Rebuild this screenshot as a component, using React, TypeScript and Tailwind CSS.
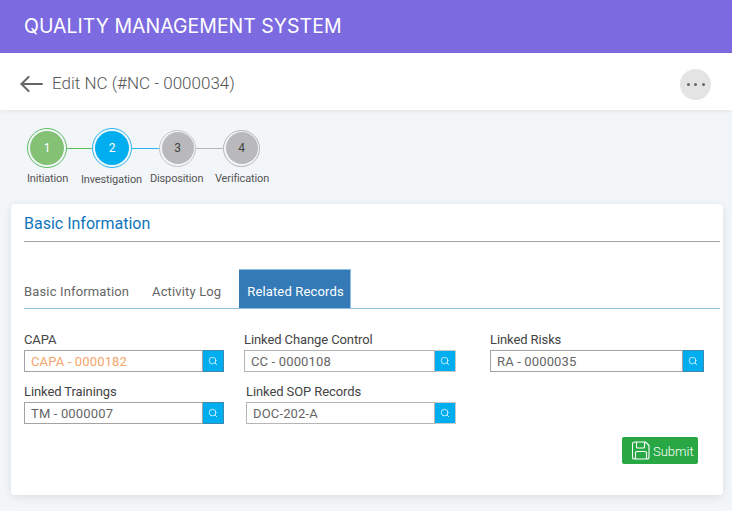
import React from "react";
import { Search } from "lucide-react";

const steps = [
  { n: 1, label: "Initiation", ring: "border-[#5cbf62]", fill: "bg-[#84c175]", text: "text-white", size: "w-[40px] h-[40px]", inner: "w-[34px] h-[34px]" },
  { n: 2, label: "Investigation", ring: "border-[#2cb5ee]", fill: "bg-[#00aeef]", text: "text-white", size: "w-[40px] h-[40px]", inner: "w-[34px] h-[34px]" },
  { n: 3, label: "Disposition", ring: "border-[#c4c4c6]", fill: "bg-[#b9b9bb]", text: "text-[#444]", size: "w-[37px] h-[37px]", inner: "w-[32px] h-[32px]" },
  { n: 4, label: "Verification", ring: "border-[#b4b4b6]", fill: "bg-[#b9b9bb]", text: "text-[#444]", size: "w-[37px] h-[37px]", inner: "w-[32px] h-[32px]" },
];

function Circle({ step }: { step: (typeof steps)[number] }) {
  return (
    <div className={`${step.size} ${step.ring} shrink-0 rounded-full border-[1.5px] flex items-center justify-center`}>
      <div className={`${step.inner} ${step.fill} ${step.text} rounded-full flex items-center justify-center text-[12px]`}>
        {step.n}
      </div>
    </div>
  );
}

function Lookup({ label, value, width, inputClass, soft, className }: { label: string; value: string; width: string; inputClass?: string; soft?: boolean; className?: string }) {
  return (
    <div className={`${width} ${className ?? ""}`}>
      <div className="text-[13px] leading-[15px] tracking-[-0.1px] text-[#444] mb-[3px] whitespace-nowrap">{label}</div>
      <div className="flex h-[22px]">
        <div className={`flex-1 min-w-0 border ${soft ? "border-[#b5b5b5]" : "border-[#a3a3a3]"} bg-white pl-[6px] text-[13px] leading-[21px] tracking-[0.15px] ${inputClass ?? "text-[#666]"}`}>
          {value}
        </div>
        <div className={`w-[21px] bg-[#00aeef] border-y border-r flex items-center justify-center ${soft ? "border-[#c8c8c8]" : "border-[#3d8ab0]"}`}>
          <Search size={10} className="text-white" strokeWidth={1.8} />
        </div>
      </div>
    </div>
  );
}

export default function App() {
  return (
    <div className="w-[732px] h-[511px] overflow-hidden bg-[#f3f6f9] font-['Roboto',sans-serif]">
      <div className="h-[53px] bg-[#7c6ae0] flex items-center pl-[24px] text-white text-[19.5px] font-['Inter',sans-serif]">
        QUALITY MANAGEMENT SYSTEM
      </div>
      <div className="h-[57px] bg-white flex items-center justify-between pt-[5px] pl-[20px] pr-[21px] shadow-[0_1px_4px_rgba(0,0,0,0.08)]">
        <div className="flex items-center gap-[9px]">
          <svg width="23" height="16" viewBox="0 0 23 16" fill="none" stroke="#666" strokeWidth="2" strokeLinecap="round" strokeLinejoin="round">
            <path d="M22 8H1.5" />
            <path d="M8.5 1L1.5 8l7 7" />
          </svg>
          <span className="text-[17px] font-light text-[#555]">Edit NC (#NC - 0000034)</span>
        </div>
        <div className="w-[31px] h-[31px] rounded-full bg-[#e4e4e4] flex items-center justify-center gap-[4.5px]">
          <span className="w-[3px] h-[3px] rounded-full bg-[#666]" />
          <span className="w-[3px] h-[3px] rounded-full bg-[#666]" />
          <span className="w-[3px] h-[3px] rounded-full bg-[#666]" />
        </div>
      </div>

      <div className="pl-[11px] pt-[18px]">
        <div className="flex items-center pl-[16px]">
          <Circle step={steps[0]} />
          <div className="w-[25px] h-px bg-[#5cbf62]" />
          <Circle step={steps[1]} />
          <div className="w-[27px] h-px bg-[#2cb5ee]" />
          <Circle step={steps[2]} />
          <div className="w-[27px] h-px bg-[#b4b4b6]" />
          <Circle step={steps[3]} />
        </div>
        <div className="flex text-[11px] leading-[13px] tracking-[-0.15px] text-[#555] mt-[4px] h-[32px]">
          <span className="w-[70px] pl-[16px]">Initiation</span>
          <span className="w-[69px] mt-[1px]">Investigation</span>
          <span className="w-[65px]">Disposition</span>
          <span>Verification</span>
        </div>

        <div className="h-[291px] w-[712px] bg-white rounded-[4px] pl-[13px] pr-[3px] shadow-[0_2px_10px_rgba(0,0,0,0.1)]">
          <div className="h-[38px] border-b border-[#a3a3a3] text-[16px] leading-[39px] text-[#0f75bc]">Basic Information</div>
          <div className="flex items-stretch h-[40px] mt-[27px] border-b border-[#8fc1e3] text-[13px] tracking-[0.15px]">
            <div className="flex items-center pt-[6px] text-[#666] w-[128px]">Basic Information</div>
            <div className="flex items-center pt-[6px] text-[#666] w-[87px]">Activity Log</div>
            <div className="flex items-center justify-center pt-[6px] pl-[2px] w-[112px] bg-[#337ab7] text-white border-t border-r border-[#8fc1e3]">Related Records</div>
          </div>
          <div className="flex mt-[23px]">
            <Lookup label="CAPA" value="CAPA - 0000182" width="w-[200px]" inputClass="text-[#f5a46c]" />
            <Lookup label="Linked Change Control" value="CC - 0000108" width="w-[212px]" soft className="ml-[20px]" />
            <Lookup label="Linked Risks" value="RA - 0000035" width="w-[214px]" className="ml-[34px]" />
          </div>
          <div className="flex mt-[12px]">
            <Lookup label="Linked Trainings" value="TM - 0000007" width="w-[200px]" />
            <Lookup label="Linked SOP Records" value="DOC-202-A" width="w-[210px]" soft className="ml-[22px]" />
          </div>
          <div className="flex justify-end mt-[13px] pr-[22px]">
            <button className="h-[27px] w-[76px] rounded-[2px] bg-[#28a745] text-white text-[13px] font-light flex items-center pl-[10px] gap-[3px]">
              <svg width="18" height="19" viewBox="0 0 18 19" fill="none" stroke="currentColor" strokeWidth="1.1" strokeLinejoin="round">
                <path d="M2.5 1h11L17 4.5V16a2 2 0 0 1-2 2H2.5a2 2 0 0 1-2-2V3a2 2 0 0 1 2-2z" />
                <path d="M4.5 1v5a1 1 0 0 0 1 1h6a1 1 0 0 0 1-1V1" />
                <path d="M3.5 18v-6a1.5 1.5 0 0 1 1.5-1.5h8a1.5 1.5 0 0 1 1.5 1.5v6" />
              </svg>
              <span className="pt-[2px]">Submit</span>
            </button>
          </div>
        </div>
      </div>
    </div>
  );
}
